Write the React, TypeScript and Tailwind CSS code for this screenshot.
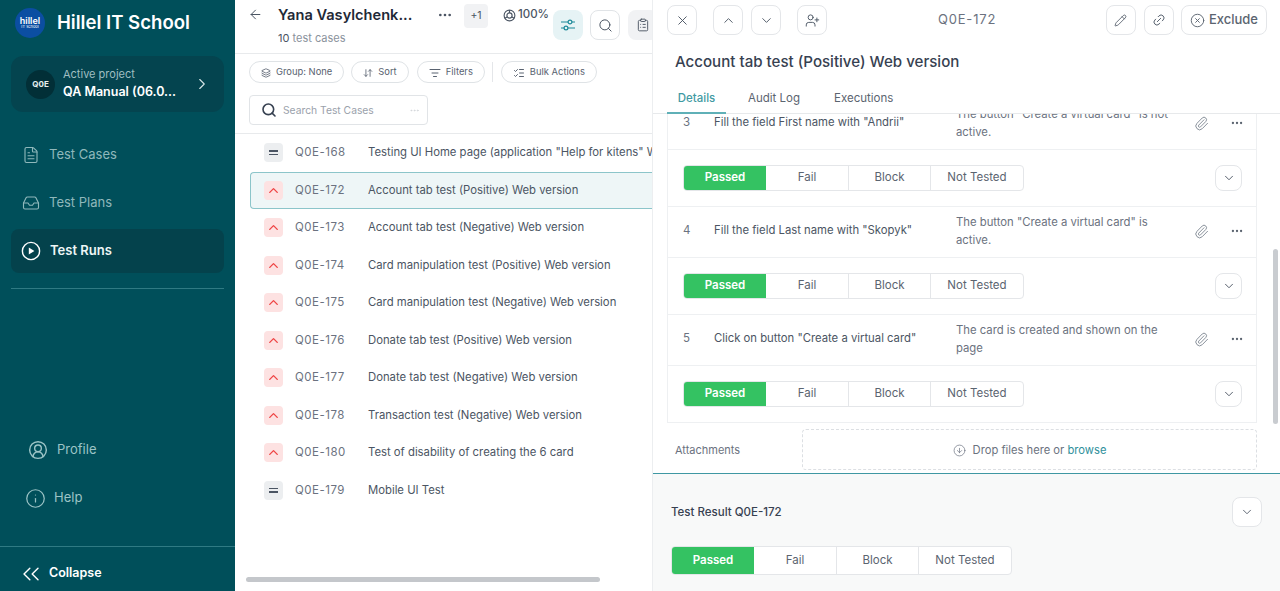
import {
  ArrowLeft,
  ArrowDownUp,
  ChevronDown,
  ChevronRight,
  ChevronUp,
  ChevronsLeft,
  CircleArrowDown,
  CircleUserRound,
  CircleX,
  ClipboardList,
  Ellipsis,
  FileText,
  Inbox,
  Info,
  Layers,
  Link2,
  ListChecks,
  ListFilter,
  Paperclip,
  Pencil,
  Search,
  UserPlus,
  X,
} from "lucide-react";
import type { ReactNode } from "react";

const cases = [
  { id: "Q0E-168", title: 'Testing UI Home page (application "Help for kitens" Web version)', level: "mid" },
  { id: "Q0E-172", title: "Account tab test (Positive) Web version", level: "high", active: true },
  { id: "Q0E-173", title: "Account tab test (Negative) Web version", level: "high" },
  { id: "Q0E-174", title: "Card manipulation test (Positive) Web version", level: "high" },
  { id: "Q0E-175", title: "Card manipulation test (Negative) Web version", level: "high" },
  { id: "Q0E-176", title: "Donate tab test (Positive) Web version", level: "high" },
  { id: "Q0E-177", title: "Donate tab test (Negative) Web version", level: "high" },
  { id: "Q0E-178", title: "Transaction test (Negative) Web version", level: "high" },
  { id: "Q0E-180", title: "Test of disability of creating the 6 card", level: "high" },
  { id: "Q0E-179", title: "Mobile UI Test", level: "mid" },
];

const steps = [
  { n: 3, action: 'Fill the field First name with "Andrii"', result: 'The button "Create a virtual card" is not active.' },
  { n: 4, action: 'Fill the field Last name with "Skopyk"', result: 'The button "Create a virtual card" is active.' },
  { n: 5, action: 'Click on button "Create a virtual card"', result: "The card is created and shown on the page" },
];

function NavItem({ icon, label, active }: { icon: ReactNode; label: string; active?: boolean }) {
  return (
    <div
      className={
        "flex h-[44px] items-center gap-[9px] rounded-lg pl-[11px] text-[13px] " +
        (active ? "bg-[#04424c] font-semibold text-[#eef6f6]" : "text-[#8fb8bb]")
      }
    >
      {icon}
      {label}
    </div>
  );
}

function CirclePlayIcon() {
  return (
    <svg viewBox="0 0 20 20" className="-ml-[1px] h-[20px] w-[20px] text-white" fill="none">
      <circle cx="10" cy="10" r="8.6" stroke="currentColor" strokeWidth="1.4" />
      <path d="M7.8 6.4 13.4 10l-5.6 3.6z" fill="currentColor" />
    </svg>
  );
}

function Sidebar() {
  return (
    <aside className="flex h-full w-[235px] shrink-0 flex-col bg-[#004f5a]">
      <div className="flex h-[45px] items-center gap-[12px] pl-[15px]">
        <div className="flex h-[30px] w-[30px] flex-col items-center justify-center rounded-full bg-[#0b4ea2] leading-none text-white">
          <span className="text-[9px] font-semibold">hillel</span>
          <span className="text-[4px]">IT school</span>
        </div>
        <span className="text-[18.6px] font-semibold text-white">Hillel IT School</span>
      </div>
      <div className="mx-[11px] mt-[11px] flex h-[56px] items-center rounded-xl bg-[#04444f] pl-[15px]">
        <div className="flex h-[29px] w-[29px] items-center justify-center rounded-full bg-[#022f37] text-[8px] font-bold text-[#e5eeee]">
          Q0E
        </div>
        <div className="ml-[8px] w-[122px] leading-none">
          <div className="text-[11px] text-[#9fbec1]">Active project</div>
          <div className="mt-[6px] text-[12.5px] font-semibold whitespace-nowrap text-white">QA Manual (06.0...</div>
        </div>
        <ChevronRight className="ml-[8px] h-[18px] w-[18px] text-[#d5e5e6]" strokeWidth={1.5} />
      </div>
      <nav className="mx-[11px] mt-[16px] flex flex-col gap-[4px] pt-[5px]">
        <NavItem icon={<FileText className="h-[18px] w-[18px]" strokeWidth={1.5} />} label="Test Cases" />
        <NavItem icon={<Inbox className="h-[18px] w-[18px]" strokeWidth={1.5} />} label="Test Plans" />
        <NavItem icon={<CirclePlayIcon />} label="Test Runs" active />
      </nav>
      <div className="mx-[11px] mt-[15px] border-t border-[#2f7a83]" />
      <div className="mt-auto flex flex-col">
        <div className="flex h-[48px] items-center gap-[9px] pl-[28px] text-[13px] text-[#9cc4c6]">
          <CircleUserRound className="h-[20px] w-[20px]" strokeWidth={1.7} />
          Profile
        </div>
        <div className="flex h-[48px] items-center gap-[8px] pl-[25px] text-[13px] text-[#9cc4c6]">
          <Info className="h-[21px] w-[21px]" strokeWidth={1.4} />
          Help
        </div>
        <div className="mt-[24px] flex h-[45px] items-center gap-[4px] border-t border-[#2f7a83] pt-[9px] pl-[17px] text-[12.5px] font-semibold text-white">
          <ChevronsLeft className="h-[28px] w-[28px]" strokeWidth={1.2} />
          Collapse
        </div>
      </div>
    </aside>
  );
}

function Pill({ icon, label, className = "" }: { icon: ReactNode; label: string; className?: string }) {
  return (
    <div className={"flex h-[22px] items-center gap-[5px] rounded-full border border-[#dfe3e6] px-[11px] pt-[1px] text-[9.4px] text-[#596270] " + className}>
      {icon}
      {label}
    </div>
  );
}

function CaseRow({ id, title, level, active }: { id: string; title: string; level: string; active?: boolean }) {
  return (
    <div
      className={
        "flex h-[37.5px] shrink-0 items-center " +
        (active ? "ml-[15px] rounded-l border border-r-0 border-[#8cc5ca] bg-[#eef6f7] pl-[13px]" : "pl-[29px]")
      }
    >
      {level === "high" ? (
        <div className="flex h-[19px] w-[19px] shrink-0 items-center justify-center rounded bg-[#fde2e2]">
          <ChevronUp className="h-[15px] w-[15px] text-[#ef4444]" strokeWidth={2.2} />
        </div>
      ) : (
        <div className="flex h-[19px] w-[19px] shrink-0 flex-col items-center justify-center gap-[2px] rounded bg-[#eceef0]">
          <span className="h-[1.5px] w-[9px] bg-[#4b5563]" />
          <span className="h-[1.5px] w-[9px] bg-[#4b5563]" />
        </div>
      )}
      <span className="ml-[12px] w-[73px] shrink-0 text-[11.5px] tracking-[0.5px] text-[#6b7280]">{id}</span>
      <span className="text-[11.3px] whitespace-nowrap text-[#4b5563]">{title}</span>
    </div>
  );
}

function CaseList() {
  return (
    <section className="relative flex h-full w-[417px] shrink-0 flex-col overflow-hidden bg-white">
      <div className="flex h-[54px] shrink-0 border-b border-[#e8eaec]">
        <ArrowLeft className="mt-[7px] ml-[13px] h-[15px] w-[15px] shrink-0 text-[#4b5563]" strokeWidth={1.6} />
        <div className="ml-[15px] w-[128px] shrink-0 pt-[7px]">
          <div className="text-[14.6px] leading-[16px] font-semibold whitespace-nowrap text-[#1f2937]">Yana Vasylchenk...</div>
          <div className="mt-[8px] text-[11px] leading-[14px] text-[#8a929c]">
            <span className="text-[#4b5563]">10</span> test cases
          </div>
        </div>
        <Ellipsis className="mt-[7px] ml-[31px] h-[16px] w-[16px] shrink-0 text-[#4b5563]" strokeWidth={2} />
        <div className="mt-[4px] ml-[11px] flex h-[24px] w-[24px] shrink-0 items-center justify-center rounded bg-[#f1f2f4] text-[10.5px] text-[#4b5563]">
          +1
        </div>
        <div className="mt-[8px] ml-[15px] flex h-[14px] shrink-0 items-center gap-[2px] text-[11.5px] font-medium text-[#4b5563]">
          <svg viewBox="0 0 14 14" className="h-[13px] w-[13px]" fill="none" stroke="currentColor" strokeWidth="1.2">
            <circle cx="7" cy="7" r="5.8" />
            <circle cx="7" cy="7" r="2.8" />
            <path d="M7 1.2v3M9.5 8.5l2.6 1.4M4.5 8.5l-2.6 1.4" />
          </svg>
          100%
        </div>
        <div className="mt-[10px] ml-[4px] flex h-[30px] w-[30px] shrink-0 items-center justify-center rounded-lg bg-[#e6f3f5]">
          <svg viewBox="0 0 16 16" className="h-[16px] w-[16px] text-[#1d8a9a]" fill="none" stroke="currentColor" strokeWidth="1.2">
            <path d="M1 5h7M12 5h3M1 11h3M8 11h7" />
            <circle cx="10" cy="5" r="1.9" />
            <circle cx="6" cy="11" r="1.9" />
          </svg>
        </div>
        <div className="mt-[10px] ml-[7px] flex h-[30px] w-[30px] shrink-0 items-center justify-center rounded-lg border border-[#e1e4e7]">
          <Search className="h-[15px] w-[15px] text-[#4b5563]" strokeWidth={1.6} />
        </div>
        <div className="mt-[10px] ml-[8px] flex h-[30px] w-[30px] shrink-0 items-center justify-center rounded-lg bg-[#f1f2f4]">
          <ClipboardList className="h-[14px] w-[14px] text-[#4b5563]" strokeWidth={1.6} />
        </div>
      </div>
      <div className="flex h-[80px] shrink-0 flex-col border-b border-[#e8eaec] pl-[14px]">
        <div className="mt-[7px] flex items-center gap-[7px]">
          <Pill icon={<Layers className="h-[10px] w-[10px]" />} label="Group: None" />
          <Pill icon={<ArrowDownUp className="h-[10px] w-[10px]" />} label="Sort" />
          <Pill icon={<ListFilter className="h-[12px] w-[12px]" />} label="Filters" className="ml-[1px]" />
          <div className="h-[20px] border-l border-[#e4e6e9]" />
          <Pill icon={<ListChecks className="h-[12px] w-[12px]" />} label="Bulk Actions" className="ml-[1px]" />
        </div>
        <div className="mt-[12px] flex h-[30px] w-[179px] items-center rounded border border-[#e1e4e7] pl-[11px] text-[10.3px] text-[#9aa1ab]">
          <Search className="h-[16px] w-[16px] text-[#374151]" strokeWidth={2.4} />
          <span className="mt-[2px] ml-[6px]">Search Test Cases</span>
          <Ellipsis className="mr-[7px] ml-auto h-[11px] w-[11px] text-[#d3d6da]" />
        </div>
      </div>
      <div className="flex flex-col overflow-hidden">
        {cases.map((c) => (
          <CaseRow key={c.id} {...c} />
        ))}
      </div>
      <div className="absolute bottom-[9px] left-[11px] h-[5px] w-[354px] rounded-full bg-[#c4c7cb]" />
    </section>
  );
}

function IconBtn({ children, className = "" }: { children: ReactNode; className?: string }) {
  return (
    <div className={"flex h-[30px] w-[30px] shrink-0 items-center justify-center rounded-lg border border-[#e4e6e9] bg-white text-[#4b5563] " + className}>
      {children}
    </div>
  );
}

function StatusBar({ tall }: { tall?: boolean }) {
  const cell = "flex items-center justify-center border-l border-[#e4e6e9] text-[11.5px] text-[#5b6470]";
  return (
    <div className={"flex w-[341px] overflow-hidden rounded border border-[#e4e6e9] bg-white " + (tall ? "h-[29px]" : "h-[26px]")}>
      <div className="flex w-[82px] items-center justify-center bg-[#34c262] text-[11.5px] font-semibold text-white">Passed</div>
      <div className="flex w-[82px] items-center justify-center text-[11.5px] text-[#5b6470]">Fail</div>
      <div className={"w-[82px] " + cell}>Block</div>
      <div className={"flex-1 " + cell}>Not Tested</div>
    </div>
  );
}

function Step({ n, action, result, first }: { n: number; action: string; result: string; first?: boolean }) {
  return (
    <div className="border-b border-[#eef0f2]">
      <div className={"flex h-[51px] border-b border-[#eef0f2] " + (first ? "-mt-[15px]" : "")}>
        <div className="mb-[3px] w-[46px] shrink-0 self-center pl-[15px] text-[11.5px] text-[#6b7280]">{n}</div>
        <div className="mb-[4px] w-[242px] shrink-0 self-center text-[11.3px] text-[#4b5563]">{action}</div>
        <div className="mb-[2px] w-[216px] shrink-0 self-center text-[11.3px] leading-[18px] text-[#6b7280]">{result}</div>
        <Paperclip className="mb-[2px] ml-[22px] h-[15px] w-[15px] self-center text-[#8a929c]" strokeWidth={1.6} />
        <Ellipsis className="mb-[2px] ml-[21px] h-[14px] w-[14px] self-center text-[#5b6470]" strokeWidth={2} />
      </div>
      <div className="flex h-[56px] items-center justify-between pr-[14px] pl-[15px]">
        <StatusBar />
        <IconBtn className="!h-[26px] !w-[27px]">
          <ChevronDown className="h-[14px] w-[14px]" strokeWidth={1.6} />
        </IconBtn>
      </div>
    </div>
  );
}

function DetailPanel() {
  return (
    <section className="flex h-full min-w-0 flex-1 flex-col border-l border-[#eceef0] bg-white">
      <div className="flex h-[40px] shrink-0 items-center pr-[13px] pl-[14px]">
        <IconBtn>
          <X className="h-[15px] w-[15px]" strokeWidth={1.5} />
        </IconBtn>
        <div className="ml-[16px] flex gap-[8px]">
          <IconBtn>
            <ChevronUp className="h-[15px] w-[15px]" strokeWidth={1.5} />
          </IconBtn>
          <IconBtn>
            <ChevronDown className="h-[15px] w-[15px]" strokeWidth={1.5} />
          </IconBtn>
        </div>
        <IconBtn className="ml-[16px]">
          <UserPlus className="h-[15px] w-[15px]" strokeWidth={1.5} />
        </IconBtn>
        <span className="ml-[111px] text-[13px] tracking-[0.8px] text-[#6b7280]">Q0E-172</span>
        <IconBtn className="ml-auto">
          <Pencil className="h-[13px] w-[13px]" strokeWidth={1.5} />
        </IconBtn>
        <IconBtn className="ml-[8px]">
          <Link2 className="h-[14px] w-[14px] -rotate-45" strokeWidth={1.5} />
        </IconBtn>
        <div className="ml-[7px] flex h-[30px] items-center gap-[4px] rounded-lg border border-[#e4e6e9] px-[8px] text-[13px] font-medium text-[#5b6470]">
          <CircleX className="h-[15px] w-[15px]" strokeWidth={1.5} />
          Exclude
        </div>
      </div>
      <h1 className="mt-[12px] pl-[22px] text-[15.1px] leading-[20px] font-medium text-[#374151]">Account tab test (Positive) Web version</h1>
      <div className="mt-[14px] flex h-[28px] shrink-0 border-b border-[#e7e9eb] pl-[14px] text-[11.5px] text-[#5b6470]">
        <div className="flex h-[28px] w-[59px] items-start justify-center border-b-2 border-[#5fb0b7] pt-[4px] font-medium text-[#3f9aa3]">Details</div>
        <div className="ml-[22px] pt-[4px]">Audit Log</div>
        <div className="ml-[34px] pt-[4px]">Executions</div>
      </div>
      <div className="relative h-[359px] shrink-0 overflow-hidden pr-[23px] pl-[14px]">
        <div className="h-[309px] overflow-hidden border-x border-b border-[#eef0f2]">
          {steps.map((s, i) => (
            <Step key={s.n} {...s} first={i === 0} />
          ))}
        </div>
        <div className="mt-[6px] flex items-start">
          <span className="mt-[13px] ml-[8px] w-[127px] text-[11px] text-[#6b7280]">Attachments</span>
          <div className="flex h-[41px] flex-1 items-center justify-center gap-[7px] rounded border border-dashed border-[#dcdfe3] pt-[1px] text-[11.2px] text-[#6b7280]">
            <CircleArrowDown className="h-[13px] w-[13px]" strokeWidth={1.3} />
            <span>
              Drop files here or <span className="text-[#2e8f9b]">browse</span>
            </span>
          </div>
        </div>
        <div className="absolute top-[135px] right-[2px] h-[175px] w-[5px] rounded-full bg-[#c9ccd0]" />
      </div>
      <div className="flex-1 border-t border-[#3f98a3] bg-[#f8f9f9] px-[18px]">
        <div className="mt-[23px] flex items-center justify-between">
          <span className="pt-[2px] text-[11.5px] font-medium text-[#374151]">Test Result Q0E-172</span>
          <IconBtn>
            <ChevronDown className="h-[14px] w-[14px]" strokeWidth={1.5} />
          </IconBtn>
        </div>
        <div className="mt-[19px]">
          <StatusBar tall />
        </div>
      </div>
    </section>
  );
}

export default function App() {
  return (
    <div className="flex h-[591px] w-[1280px] overflow-hidden font-['Inter',sans-serif]">
      <Sidebar />
      <CaseList />
      <DetailPanel />
    </div>
  );
}
